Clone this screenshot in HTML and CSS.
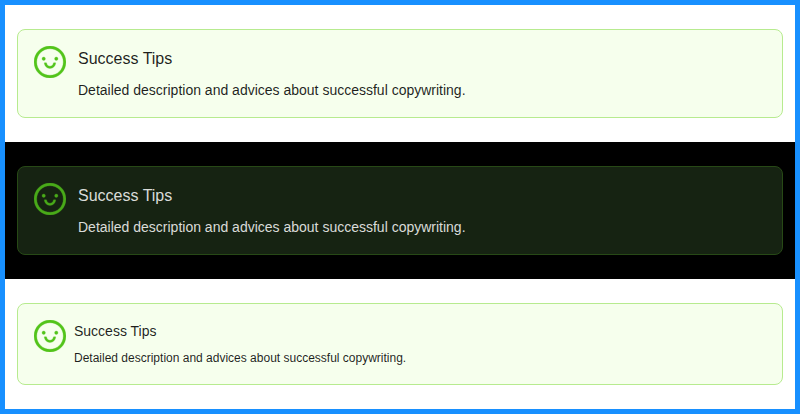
FILE: index.html
```html
<!DOCTYPE html>
<html lang="en">
<head>
<meta charset="utf-8">
<title>Alerts</title>
<link rel="stylesheet" href="styles.css">
</head>
<body>
<svg width="0" height="0" class="sprite">
  <symbol id="smile" viewBox="64 64 896 896">
    <path d="M288 421a48 48 0 1096 0 48 48 0 10-96 0zm352 0a48 48 0 1096 0 48 48 0 10-96 0zM512 64C264.600 64 64 264.600 64 512s200.600 448 448 448 448-200.600 448-448S759.400 64 512 64zm263 711c-34.200 34.200-74 61-118.300 79.800C611 874.200 562.300 884 512 884c-50.300 0-99-9.800-144.800-29.200A370.400 370.400 0 01248.900 775c-34.200-34.200-61-74-79.800-118.300C149.800 611 140 562.300 140 512s9.800-99 29.200-144.800A370.400 370.400 0 01249 248.900c34.200-34.200 74-61 118.300-79.800C413 149.800 461.700 140 512 140c50.300 0 99 9.800 144.800 29.200A370.400 370.400 0 01775.100 249c34.200 34.200 61 74 79.800 118.300C874.200 413 884 461.700 884 512s-9.800 99-29.200 144.800A368.890 368.890 0 01775 775zM664 533h-48.100c-4.200 0-7.800 3.200-8.100 7.400C604 589.900 562.500 629 512 629s-92.100-39.100-95.800-88.600c-.3-4.200-3.900-7.400-8.100-7.400H360a8 8 0 00-8 8.400c4.400 84.300 74.500 151.600 160 151.600s155.600-67.300 160-151.600a8 8 0 00-8-8.400z"/>
  </symbol>
</svg>
<main class="demo">
  <section class="panel">
    <div class="alert">
      <svg class="icon"><use href="#smile"/></svg>
      <div class="content">
        <div class="title">Success Tips</div>
        <div class="description">Detailed description and advices about successful copywriting.</div>
      </div>
    </div>
  </section>
  <section class="panel dark">
    <div class="alert">
      <svg class="icon"><use href="#smile"/></svg>
      <div class="content">
        <div class="title">Success Tips</div>
        <div class="description">Detailed description and advices about successful copywriting.</div>
      </div>
    </div>
  </section>
  <section class="panel compact">
    <div class="alert">
      <svg class="icon"><use href="#smile"/></svg>
      <div class="content">
        <div class="title">Success Tips</div>
        <div class="description">Detailed description and advices about successful copywriting.</div>
      </div>
    </div>
  </section>
</main>
</body>
</html>
```
FILE: styles.css
```css
* { box-sizing: border-box; }
body {
  margin: 0;
  font-family: "Liberation Sans", Arial, sans-serif;
  font-size: 14px;
  line-height: 22px;
  color: rgba(0, 0, 0, 0.88);
}
.sprite { display: none; }
.demo { height: 414px; border: 5px solid #1890ff; background: #fff; }
.panel { padding: 24px 12px; }
.alert {
  display: flex;
  align-items: flex-start;
  height: 89px;
  padding: 16px;
  border: 1px solid #b7eb8f;
  border-radius: 8px;
  background: #f6ffed;
}
.icon { flex: none; width: 32px; height: 32px; margin-right: 12px; fill: #52c41a; stroke: #52c41a; stroke-width: 8; }
.title { font-size: 16px; line-height: 25px; margin-bottom: 8px; }
.dark { background: #000; color: rgba(255, 255, 255, 0.85); }
.dark .alert { background: #162312; border-color: #274916; }
.dark .icon { fill: #49aa19; stroke: #49aa19; }
.compact .alert { height: 82px; }
.compact .icon { margin-right: 8px; }
.compact .title { font-size: 14px; line-height: 22px; margin-bottom: 6px; }
.compact .description { font-size: 12px; line-height: 20px; }
```
